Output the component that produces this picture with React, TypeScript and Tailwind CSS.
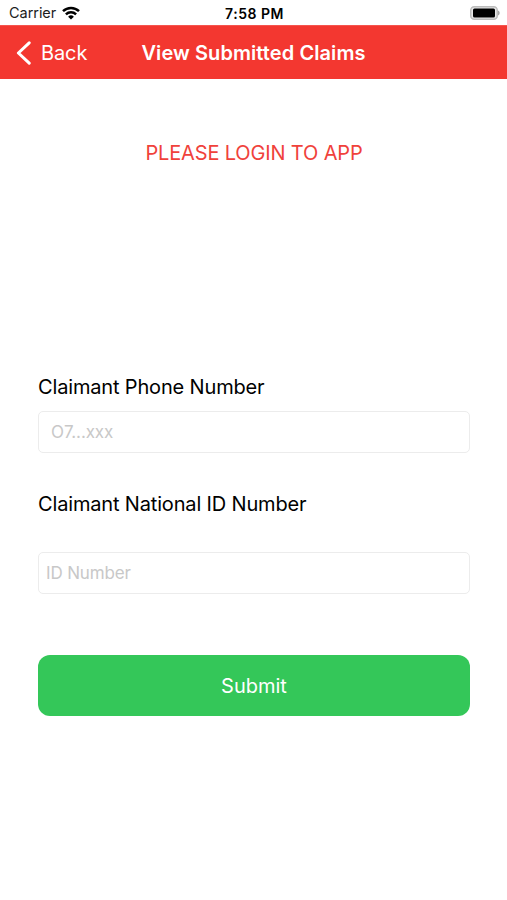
import { useState } from "react"

function StatusBar() {
  return (
    <div className="flex h-[25px] items-center justify-between bg-white pl-[9px] pr-[7px] pt-[2px] text-black">
      <div className="flex flex-1 items-center gap-[6px] text-[#1c1c1c]">
        <span className="text-[14.5px] leading-none tracking-[-0.05px]">Carrier</span>
        <svg className="mb-[2px]" width="18" height="14" viewBox="0 0 18 14" fill="none" stroke="#000" strokeWidth="2.5">
          <path d="M1 5.1a11.6 11.6 0 0 1 16 0" />
          <path d="M3.9 8.4a7.4 7.4 0 0 1 10.2 0" />
          <path d="M9 13.6 6.1 10.7a4.2 4.2 0 0 1 5.8 0z" fill="#000" stroke="none" />
        </svg>
      </div>
      <span className="text-[14px] font-semibold leading-none tracking-[0.5px]">7:58 PM</span>
      <div className="flex flex-1 justify-end">
        <svg className="mb-[2px]" width="30" height="14" viewBox="0 0 30 14">
          <rect x="0.75" y="0.75" width="26.5" height="12.5" rx="3.5" fill="#e8e8e8" stroke="#bcbcbc" strokeWidth="1.5" />
          <rect x="3" y="2.5" width="22" height="9" rx="1.5" fill="#000" />
          <path d="M28 4.5c2.2.8 2.2 4.2 0 5z" fill="#a8a8a8" />
        </svg>
      </div>
    </div>
  )
}

export default function App() {
  const [phone, setPhone] = useState("")
  const [nationalId, setNationalId] = useState("")

  return (
    <div className="flex h-[900px] w-[507px] flex-col bg-white font-['Inter',sans-serif]">
      <StatusBar />
      <header className="grid h-[54px] grid-cols-[1fr_auto_1fr] items-center border-t border-[#f5544e] bg-[#f33730] text-white">
        <button className="flex items-center gap-[10px] pl-[16px] text-[20px] tracking-[-0.1px]">
          <svg
            width="15"
            height="24"
            viewBox="0 0 15 24"
            fill="none"
            stroke="currentColor"
            strokeWidth="3"
            strokeLinecap="round"
            strokeLinejoin="round"
          >
            <path d="M13.2 1.8 2.4 12l10.8 10.2" />
          </svg>
          Back
        </button>
        <h1 className="text-[20px] font-semibold tracking-[0.08px]">View Submitted Claims</h1>
      </header>

      <main className="flex flex-col pl-[38px] pr-[37px]">
        <p className="mt-[60px] text-center text-[20px] leading-7 tracking-[-0.15px] text-[#f0423b]">
          PLEASE LOGIN TO APP
        </p>
        <label htmlFor="phone" className="mt-[206px] text-[20px] leading-7 tracking-[-0.16px] text-black">
          Claimant Phone Number
        </label>
        <input
          id="phone"
          value={phone}
          onChange={(e) => setPhone(e.target.value)}
          placeholder="O7...xxx"
          className="mt-[10px] h-[42px] rounded-[5px] border border-[#ececec] px-3 text-[17px] tracking-[-0.1px] outline-none placeholder:text-[#c8c8c8]"
        />
        <label htmlFor="national-id" className="mt-[37px] text-[20px] leading-7 tracking-[-0.16px] text-black">
          Claimant National ID Number
        </label>
        <input
          id="national-id"
          value={nationalId}
          onChange={(e) => setNationalId(e.target.value)}
          placeholder="ID Number"
          className="mt-[34px] h-[42px] rounded-[5px] border border-[#ececec] px-[7px] text-[17px] tracking-[-0.15px] outline-none placeholder:text-[#c8c8c8]"
        />
        <button className="mt-[61px] h-[61px] rounded-[12px] bg-[#34c759] text-[20px] text-white">Submit</button>
      </main>
    </div>
  )
}
